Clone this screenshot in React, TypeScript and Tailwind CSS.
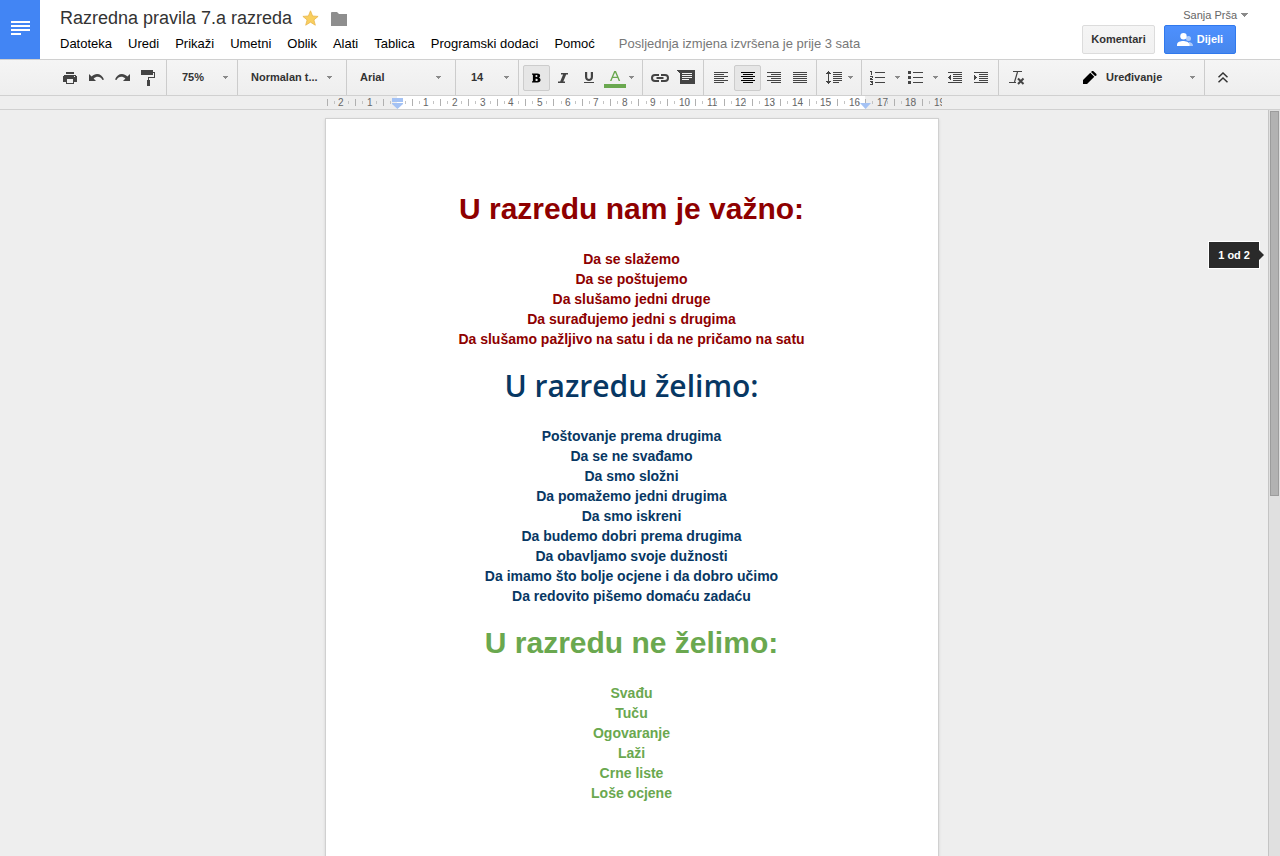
import React from "react";

interface SelectProps {
  label: string;
  value: string;
  options: string[];
  className: string;
  caretClassName?: string;
}

interface ToolButtonProps {
  label: string;
  active?: boolean;
  className?: string;
  children: React.ReactNode;
}

interface RulesSection {
  title: string;
  color: string;
  font: string;
  items: string[];
}

const menuItems = [
  "Datoteka",
  "Uredi",
  "Prikaži",
  "Umetni",
  "Oblik",
  "Alati",
  "Tablica",
  "Programski dodaci",
  "Pomoć",
];

const sections: RulesSection[] = [
  {
    title: "U razredu nam je važno:",
    color: "text-[#8e0000]",
    font: "font-bold",
    items: [
      "Da se slažemo",
      "Da se poštujemo",
      "Da slušamo jedni druge",
      "Da surađujemo jedni s drugima",
      "Da slušamo pažljivo na satu i da ne pričamo na satu",
    ],
  },
  {
    title: "U razredu želimo:",
    color: "text-[#073763]",
    font: "font-['Trebuchet_MS','Open_Sans',sans-serif] font-semibold",
    items: [
      "Poštovanje prema drugima",
      "Da se ne svađamo",
      "Da smo složni",
      "Da pomažemo jedni drugima",
      "Da smo iskreni",
      "Da budemo dobri prema drugima",
      "Da obavljamo svoje dužnosti",
      "Da imamo što bolje ocjene i da dobro učimo",
      "Da redovito pišemo domaću zadaću",
    ],
  },
  {
    title: "U razredu ne želimo:",
    color: "text-[#6aa84f]",
    font: "font-bold",
    items: ["Svađu", "Tuču", "Ogovaranje", "Laži", "Crne liste", "Loše ocjene"],
  },
];

const Caret = ({ className = "" }: { className?: string }) => (
  <svg width="5" height="3" viewBox="0 0 5 3" className={className} shapeRendering="crispEdges">
    <path d="M0 0h5v1H4v1H3v1H2V2H1V1H0z" fill="#8a8a8a" />
  </svg>
);

const ToolButton: React.FC<ToolButtonProps> = ({ label, active, className = "w-[26px]", children }) => (
  <button
    type="button"
    aria-label={label}
    title={label}
    aria-pressed={active}
    className={`flex h-[26px] shrink-0 items-center justify-center rounded-[2px] border ${
      active ? "border-[#ccc] bg-[#e6e6e6]" : "border-transparent"
    } ${className}`}
  >
    {children}
  </button>
);

const ToolSelect: React.FC<SelectProps> = ({ label, value, options, className, caretClassName = "right-[9px]" }) => (
  <div className="relative flex shrink-0 items-center">
    <select
      aria-label={label}
      defaultValue={value}
      className={`h-[26px] appearance-none bg-transparent text-[11px] font-bold text-[#333] outline-none ${className}`}
    >
      {options.map((option) => (
        <option key={option}>{option}</option>
      ))}
    </select>
    <Caret className={`pointer-events-none absolute ${caretClassName}`} />
  </div>
);

const Group = ({ className = "px-1", children }: { className?: string; children: React.ReactNode }) => (
  <div className={`flex h-full shrink-0 items-center border-r border-[#ccc] ${className}`}>{children}</div>
);

// rows of 14px wide text lines, [x, width]
const LinesIcon = ({ rows }: { rows: number[][] }) => (
  <svg width="14" height="12" viewBox="0 0 14 12" shapeRendering="crispEdges" fill="currentColor">
    {rows.map(([x, w], i) => (
      <rect key={i} x={x} y={i * 2} width={w} height="1" />
    ))}
  </svg>
);

const alignLeft = [[0, 14], [0, 10], [0, 14], [0, 10], [0, 14], [0, 10]];
const alignCenter = [[0, 14], [2, 10], [0, 14], [2, 10], [0, 14], [2, 10]];
const alignRight = [[0, 14], [4, 10], [0, 14], [4, 10], [0, 14], [4, 10]];
const alignFull = [[0, 14], [0, 14], [0, 14], [0, 14], [0, 14], [0, 14]];

const CM = 28.35;
const ZERO = 77.5;

const Ruler = () => {
  const quarters = Array.from({ length: 88 }, (_, i) => i - 10);
  const numbers = [-2, -1, ...Array.from({ length: 19 }, (_, i) => i + 1)];

  return (
    <svg width="622" height="13" viewBox="0 0 622 13" className="shrink-0" role="img" aria-label="Ravnalo">
      <rect x="77" y="0" width="468" height="13" fill="#fff" />
      {quarters.map((q) => {
        if (q % 4 === 0) return null;
        const x = Math.round(ZERO + (q * CM) / 4);
        const tall = q % 2 === 0;
        return (
          <rect
            key={q}
            x={x}
            y={tall ? 3 : 5}
            width="1"
            height={tall ? 7 : 3}
            fill={tall ? "#b0b0b0" : "#c4c4c4"}
          />
        );
      })}
      {numbers.map((n) => (
        <text
          key={n}
          x={Math.floor(ZERO + n * CM) - 2}
          y="10"
          fontSize="10"
          fill="#666"
          fontFamily="Liberation Sans, Arial, sans-serif"
        >
          {Math.abs(n)}
        </text>
      ))}
      <g fill="#a4c2f4">
        <path d="M72 2h11v4H72zM72 7h11v1l-5.500 5L72 8z" />
        <path d="M540 7h11l-5.500 6z" />
      </g>
    </svg>
  );
};

const Header = () => (
  <header className="flex h-[59px] shrink-0 bg-white">
    <a href="#" aria-label="Dokumenti" className="flex w-10 shrink-0 justify-center bg-[#4285f4] pt-[21px]">
      <svg width="19" height="14" viewBox="0 0 19 14" shapeRendering="crispEdges" fill="#fff">
        <path d="M0 0h19v2H0zM0 4h19v2H0zM0 8h19v2H0zM0 12h10v2H0z" />
      </svg>
    </a>

    <div className="flex min-w-0 flex-1 flex-col pt-2 pl-5">
      <div className="flex h-5 items-center">
        <h1 className="text-[18px] leading-5 whitespace-nowrap text-[#333]">Razredna pravila 7.a razreda</h1>
        <button type="button" aria-label="Zvjezdica" className="ml-[10px]">
          <svg width="17" height="16" viewBox="0 0 17 16">
            <path
              d="M8.500 .8l2.100 5.200 5.500.4-4.200 3.500 1.400 5.300-4.800-3-4.800 3 1.400-5.300L.9 6.400l5.500-.4z"
              fill="#f9cf5f"
              stroke="#e8b64c"
              strokeWidth=".8"
            />
          </svg>
        </button>
        <button type="button" aria-label="Mapa" className="mt-[2px] ml-3">
          <svg width="16" height="14" viewBox="0 0 16 14" fill="#8e8e8e">
            <path d="M0 1Q0 0 1 0H6l2 2h8v12H0z" />
          </svg>
        </button>
      </div>
      <nav className="mt-2 flex gap-4 text-[13px] leading-4 whitespace-nowrap text-black">
        {menuItems.map((item) => (
          <button type="button" key={item}>
            {item}
          </button>
        ))}
        <span className="ml-2 text-[#777]">Posljednja izmjena izvršena je prije 3 sata</span>
      </nav>
    </div>

    <div className="flex shrink-0 flex-col items-end pt-[7px] pr-8">
      <button type="button" className="flex items-center gap-1 text-[11px] leading-4 text-[#666]">
        Sanja Prša
        <svg width="7" height="4" viewBox="0 0 7 4" shapeRendering="crispEdges">
          <path d="M0 0h7v1H6v1H5v1H4v1H3V3H2V2H1V1H0z" fill="#8a8a8a" />
        </svg>
      </button>
      <div className="mt-[2px] mr-3 flex gap-[9px] text-[11px] font-bold">
        <button
          type="button"
          className="h-[29px] w-[73px] rounded-[2px] border border-[#dcdcdc] bg-linear-to-b from-[#f5f5f5] to-[#f1f1f1] text-[#333]"
        >
          Komentari
        </button>
        <button
          type="button"
          className="flex h-[29px] w-[72px] items-center justify-center gap-1 rounded-[2px] border border-[#3079ed] bg-linear-to-b from-[#4d90fe] to-[#4787ed] text-white"
        >
          <svg width="16" height="13" viewBox="0 0 16 13" fill="#fff">
            <g opacity=".55">
              <circle cx="11.500" cy="5.500" r="2.500" />
              <path d="M12 9c2.500.3 4 1.500 4 4h-4z" />
            </g>
            <circle cx="6.500" cy="3.200" r="3.200" />
            <path d="M0 13v-1.500C0 9 3.500 8 6 8s6.500 1 6.500 3.500V13z" />
          </svg>
          Dijeli
        </button>
      </div>
    </div>
  </header>
);

const Toolbar = () => (
  <div
    role="toolbar"
    className="flex h-[37px] shrink-0 items-center border-y border-[#d0d0d0] bg-linear-to-b from-[#f5f5f5] to-[#eee] text-[#444]"
  >
    <Group className="pr-[5px] pl-[57px]">
      <ToolButton label="Ispis">
        <svg width="14" height="12" viewBox="0 0 14 12" shapeRendering="crispEdges" fill="currentColor">
          <path d="M3 0h8v2H3zM1 3h12v1h1v6h-3v2H3v-2H0V4h1zM4 7v4h6V7zM11 4v1h1V4z" fillRule="evenodd" />
        </svg>
      </ToolButton>
      <ToolButton label="Poništi">
        <svg width="15" height="9" viewBox="0 0 15 9" fill="currentColor">
          <path d="M0 1v7h7L4.600 5.600C7.500 3 11.500 3.200 13.500 7l1.500-.5C13 .5 6.500-.8 2.600 3.600z" />
        </svg>
      </ToolButton>
      <ToolButton label="Ponovi">
        <svg width="15" height="9" viewBox="0 0 15 9" fill="currentColor">
          <path d="M15 1v7H8l2.400-2.400C7.500 3 3.500 3.200 1.500 7L0 6.500C2 .5 8.500-.8 12.400 3.600z" />
        </svg>
      </ToolButton>
      <ToolButton label="Preslikaj oblikovanje">
        <svg width="14" height="16" viewBox="0 0 14 16" shapeRendering="crispEdges" fill="currentColor">
          <path d="M0 0h12v2h2v6H8v2h1v6H6v-6h1V7h6V3h-1v2H0z" />
        </svg>
      </ToolButton>
    </Group>
    <Group className="">
      <ToolSelect label="Zumiranje" value="75%" options={["50%", "75%", "100%"]} className="w-[70px] pl-[15px]" />
    </Group>
    <Group className="">
      <ToolSelect
        label="Stilovi"
        value="Normalan t..."
        options={["Normalan t...", "Naslov 1", "Naslov 2"]}
        className="w-[108px] pl-[13px]"
        caretClassName="right-[14px]"
      />
    </Group>
    <Group className="">
      <ToolSelect
        label="Font"
        value="Arial"
        options={["Arial", "Georgia"]}
        className="w-[108px] pl-[13px]"
        caretClassName="right-[14px]"
      />
    </Group>
    <Group className="">
      <ToolSelect label="Veličina fonta" value="14" options={["12", "14", "18", "24"]} className="w-[62px] pl-[15px]" />
    </Group>
    <Group>
      <ToolButton label="Podebljano" active className="w-[27px] text-black">
        <svg width="9" height="10" viewBox="0 0 10 10" fill="currentColor">
          <path
            d="M0 0h5.800C8 0 9 1 9 2.500c0 1-.6 1.900-1.500 2.200C8.800 5 9.500 6 9.500 7.200 9.500 9 8.200 10 6 10H0V8.600h1V1.400H0zM4 1.600v2.400h1.200c1.200 0 1.200-2.400 0-2.400zM4 5.700v2.700h1.400c1.400 0 1.400-2.700 0-2.700z"
            fillRule="evenodd"
          />
        </svg>
      </ToolButton>
      <ToolButton label="Kurziv">
        <svg width="10" height="10" viewBox="0 0 10 10" fill="currentColor">
          <path d="M3 0h7v1.500H8.200L5.300 8.500H7V10H0V8.500h2.200L5.100 1.500H3z" />
        </svg>
      </ToolButton>
      <ToolButton label="Podcrtano">
        <svg width="10" height="12" viewBox="0 0 10 12" fill="currentColor">
          <path d="M1 0h2.200v5c0 2.600 3.600 2.600 3.600 0V0H9v5c0 5.400-8 5.400-8 0z" />
          <path d="M0 10h10v1H0z" />
        </svg>
      </ToolButton>
      <ToolButton label="Boja teksta">
        <svg width="22" height="17" viewBox="0 0 22 17" fill="#6aa84f" className="mt-[3px] shrink-0">
          <path d="M10.200 0h1.800l4.200 10h-1.500l-1.200-3H8.700l-1.200 3H6zM11.100 1.500L9.200 5.800h3.800z" fillRule="evenodd" />
          <path d="M0 13h22v4H0z" />
        </svg>
      </ToolButton>
      <div className="w-[10px] pl-px">
        <Caret />
      </div>
    </Group>
    <Group>
      <ToolButton label="Umetni vezu">
        <svg width="18" height="8" viewBox="0 0 18 8" fill="none" stroke="currentColor" strokeWidth="2">
          <path d="M8 1H4C0 1 0 7 4 7h4M10 1h4c4 0 4 6 0 6h-4M5.500 4h7" />
        </svg>
      </ToolButton>
      <ToolButton label="Umetni komentar">
        <svg width="18" height="14" viewBox="0 0 18 14" shapeRendering="crispEdges" className="mb-[2px] shrink-0">
          <path d="M0 0h18v14H3V3H2V2H1V1H0z" fill="currentColor" />
          <path d="M5 3h10v1H5zM5 5h10v1H5zM5 7h10v1H5zM5 9h7v1H5z" fill="#f2f2f2" />
        </svg>
      </ToolButton>
    </Group>
    <Group className="pr-[3px] pl-1">
      <ToolButton label="Poravnaj lijevo">
        <LinesIcon rows={alignLeft} />
      </ToolButton>
      <ToolButton label="Centriraj" active className="w-[27px] text-black">
        <LinesIcon rows={alignCenter} />
      </ToolButton>
      <ToolButton label="Poravnaj desno">
        <LinesIcon rows={alignRight} />
      </ToolButton>
      <ToolButton label="Obostrano poravnaj">
        <LinesIcon rows={alignFull} />
      </ToolButton>
    </Group>
    <Group>
      <ToolButton label="Prored" className="w-[36px]">
        <svg width="16" height="13" viewBox="0 0 16 13" shapeRendering="crispEdges" fill="currentColor" className="mr-[6px]">
          <path d="M2 0h1v1h1v1h1v1H3v7h2v1H4v1H3v1H2v-1H1v-1H0v-1h2V3H0V2h1V1h1z" />
          <path d="M7 1h9v1H7zM7 3h9v1H7zM7 5h9v1H7zM7 7h9v1H7zM7 9h9v1H7zM7 11h6v1H7z" />
        </svg>
        <Caret />
      </ToolButton>
    </Group>
    <Group>
      <ToolButton label="Numerirani popis" className="w-[38px]">
        <svg width="16" height="14" viewBox="0 0 16 14" shapeRendering="crispEdges" fill="currentColor" className="mr-[9px]">
          <path d="M0 0h2v4H1V1H0zM0 5h3v2H2v1h1v1H0V7h2V6H0zM0 10h3v4H0v-1h2v-1H1v-1h1H0z" />
          <path d="M5 1h10v1H5zM5 6h10v1H5zM5 11h10v1H5z" />
        </svg>
        <Caret />
      </ToolButton>
      <ToolButton label="Popis s grafičkim oznakama" className="w-[38px]">
        <svg width="16" height="13" viewBox="0 0 16 13" shapeRendering="crispEdges" fill="currentColor" className="mr-[9px]">
          <path d="M0 0h3v3H0zM0 5h3v3H0zM0 10h3v3H0z" />
          <path d="M5 1h10v1H5zM5 6h10v1H5zM5 11h10v1H5z" />
        </svg>
        <Caret />
      </ToolButton>
      <ToolButton label="Smanji uvlaku">
        <svg width="14" height="11" viewBox="0 0 14 11" shapeRendering="crispEdges" fill="currentColor">
          <path d="M0 0h14v1H0zM5 2h9v1H5zM5 4h9v1H5zM5 6h9v1H5zM5 8h9v1H5zM0 10h14v1H0zM3 3v5H2V7H1V6H0V5h1V4h1V3z" />
        </svg>
      </ToolButton>
      <ToolButton label="Povećaj uvlaku">
        <svg width="14" height="11" viewBox="0 0 14 11" shapeRendering="crispEdges" fill="currentColor">
          <path d="M0 0h14v1H0zM5 2h9v1H5zM5 4h9v1H5zM5 6h9v1H5zM5 8h9v1H5zM0 10h14v1H0zM0 3h1v1h1v1h1v1H2v1H1v1H0z" />
        </svg>
      </ToolButton>
    </Group>
    <div className="flex flex-1 px-1">
      <ToolButton label="Izbriši oblikovanje">
        <svg width="16" height="14" viewBox="0 0 16 14" fill="none" stroke="currentColor" className="ml-[2px]">
          <path d="M4 .5h9M8.500 1l-3 10M0 11.500h7" strokeWidth="1.200" />
          <path d="M9 7.500l5.500 5.500M14.500 7.500L9 13" strokeWidth="2" />
        </svg>
      </ToolButton>
    </div>
    <Group className="">
      <svg width="14" height="13" viewBox="0 0 14 13" fill="#000">
        <path d="M0 13V9L7.300 1.700l4 4L4 13zM8 1l.6-.6c.6-.5 1.500-.5 2.100 0l2.500 2.300c.5.600.5 1.400 0 2L12 5z" />
      </svg>
      <ToolSelect
        label="Način rada"
        value="Uređivanje"
        options={["Uređivanje", "Predlaganje", "Pregledavanje"]}
        className="w-[107px] pl-[9px]"
      />
    </Group>
    <div className="flex w-[75px] shrink-0 pl-[5px]">
      <ToolButton label="Sakrij izbornike">
        <svg width="10" height="11" viewBox="0 0 10 11" fill="none" stroke="#333" strokeWidth="1.500">
          <path d="M.5 5.200L5 1l4.500 4.200M.5 10.200L5 6l4.500 4.200" />
        </svg>
      </ToolButton>
    </div>
  </div>
);

const App: React.FC = () => {
  return (
    <div className="flex h-screen flex-col overflow-hidden bg-[#eee] font-['Liberation_Sans',Arial,sans-serif]">
      <Header />
      <Toolbar />

      <div className="flex shrink-0 justify-center border-b border-[#d0d0d0] pr-[18px]">
        <Ruler />
      </div>

      {/* Document area */}
      <div className="relative flex min-h-0 flex-1">
        <main className="flex min-w-0 flex-1 items-start justify-center overflow-hidden pt-2 pr-[5px]">
          <article className="w-[614px] shrink-0 border border-[#d0d0d0] bg-white px-[72px] py-[72px] text-center shadow-sm">
            {sections.map((section) => (
              <section key={section.title} className={`mb-[19px] ${section.color}`}>
                <h2 className={`mb-[22px] text-[30px] leading-9 ${section.font}`}>{section.title}</h2>
                {section.items.map((item) => (
                  <p key={item} className="text-[14px] leading-5 font-bold whitespace-nowrap">
                    {item}
                  </p>
                ))}
              </section>
            ))}
          </article>
        </main>

        <div className="w-3 shrink-0 border-l border-[#c4c4c4] bg-[#e0e0e0] px-px pt-px">
          <div className="h-[385px] border border-[#9c9c9c] bg-[#b2b2b2]" />
        </div>

        {/* Page indicator */}
        <div className="absolute top-[131px] right-4 flex items-center">
          <div className="border border-white bg-[#2a2a2a] px-[9px] text-[11px] leading-[26px] font-bold text-white">
            1 od 2
          </div>
          <svg width="5" height="10" viewBox="0 0 5 10" fill="#2a2a2a" className="relative -ml-px">
            <path d="M0 0l5 5-5 5z" />
          </svg>
        </div>
      </div>
    </div>
  );
};

export default App;
